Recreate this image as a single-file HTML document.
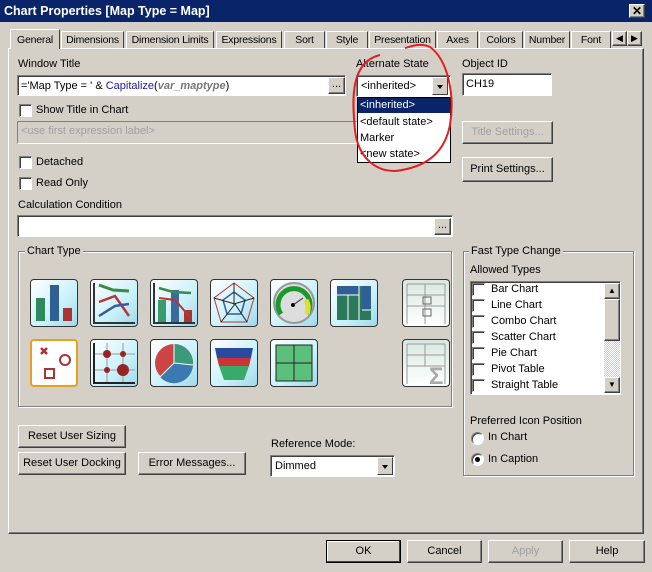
<!DOCTYPE html>
<html><head><style>
body{margin:0;width:652px;height:572px;background:#d4d0c8;font-family:"Liberation Sans",sans-serif;font-size:11px;color:#000;position:relative;overflow:hidden}
.a{position:absolute;white-space:nowrap}
.tb{left:0;top:0;width:652px;height:22px;background:#0a246a;color:#fff;font-weight:bold;font-size:12.5px;line-height:22px}
.in{background:#fff;border:1px solid;border-color:#808080 #fff #fff #808080;box-shadow:inset 1px 1px 0 #404040;box-sizing:border-box}
.btn{background:#d4d0c8;border:1px solid;border-color:#fff #404040 #404040 #fff;box-shadow:inset -1px -1px 0 #808080;box-sizing:border-box;text-align:center;line-height:20px}
.cb{width:13px;height:13px;background:#fff;border:1px solid;border-color:#808080 #fff #fff #808080;box-shadow:inset 1px 1px 0 #404040;box-sizing:border-box}
.grp{border:1px solid #808080;box-shadow:1px 1px 0 #fff,inset 1px 1px 0 #fff}
.lg{background:#d4d0c8;padding:0 2px}
.tab{top:31px;height:17px;line-height:17px;border:1px solid;border-color:#fff #404040 transparent #fff;border-bottom:none;text-align:center;box-sizing:border-box;font-size:10.5px;letter-spacing:-0.2px}
.ic{width:48px;height:48px;border:1px solid #333;border-radius:4px;box-sizing:border-box;background:linear-gradient(135deg,#fff,#c9f1fb 60%,#9fd8ea)}
.dd{width:16px;background:#d4d0c8;border:1px solid;border-color:#fff #404040 #404040 #fff;box-sizing:border-box}
.dd:after{content:"";position:absolute;left:4px;top:7px;border:3px solid transparent;border-top:4px solid #000}
.li{left:472px;height:16px;line-height:16px}
</style></head><body>
<div class="a tb"><span style="padding-left:4px">Chart Properties [Map Type = Map]</span></div>
<div class="a btn" style="left:629px;top:4px;width:16px;height:14px;line-height:12px;font-weight:bold;font-size:12px">✕</div>
<div class="a" style="left:8px;top:48px;width:636px;height:486px;border:1px solid;border-color:#fff #404040 #404040 #fff;box-sizing:border-box;box-shadow:inset -1px -1px 0 #808080"></div>
<div class="a tab" style="left:10px;top:29px;height:20px;width:50px;background:#d4d0c8;z-index:2;line-height:20px">General</div>
<div class="a tab" style="left:61px;width:63px">Dimensions</div>
<div class="a tab" style="left:126px;width:88px">Dimension Limits</div>
<div class="a tab" style="left:216px;width:66px">Expressions</div>
<div class="a tab" style="left:284px;width:41px">Sort</div>
<div class="a tab" style="left:326px;width:42px">Style</div>
<div class="a tab" style="left:369px;width:67px">Presentation</div>
<div class="a tab" style="left:437px;width:41px">Axes</div>
<div class="a tab" style="left:479px;width:44px">Colors</div>
<div class="a tab" style="left:524px;width:46px">Number</div>
<div class="a tab" style="left:571px;width:40px">Font</div>
<div class="a btn" style="left:612px;top:31px;width:15px;height:15px;line-height:13px;font-size:9px">◀</div>
<div class="a btn" style="left:627px;top:31px;width:15px;height:15px;line-height:13px;font-size:9px">▶</div>

<div class="a" style="left:18px;top:58px">Window Title</div>
<div class="a in" style="left:17px;top:75px;width:329px;height:21px;padding:3px 3px;line-height:14px">='Map Type = ' &amp; <span style="color:#1a1aa0">Capitalize</span>(<i style="color:#777;font-weight:bold">var_maptype</i>)</div>
<div class="a btn" style="left:328px;top:77px;width:17px;height:17px;line-height:12px">...</div>
<div class="a" style="left:356px;top:58px">Alternate State</div>
<div class="a in" style="left:356px;top:75px;width:95px;height:22px;padding:4px 4px;line-height:13px">&lt;inherited&gt;</div>
<div class="a dd" style="left:432px;top:77px;height:18px"></div>
<div class="a" style="left:357px;top:97px;width:94px;height:66px;background:#fff;border:1px solid #000;box-sizing:border-box"></div>
<div class="a" style="left:358px;top:98px;width:92px;height:15px;background:#0a246a;color:#fff;line-height:15px;padding-left:2px;box-sizing:border-box">&lt;inherited&gt;</div>
<div class="a" style="left:360px;top:114px;line-height:16px">&lt;default state&gt;</div>
<div class="a" style="left:360px;top:130px;line-height:16px">Marker</div>
<div class="a" style="left:360px;top:146px;line-height:16px">&lt;new state&gt;</div>
<div class="a" style="left:462px;top:58px">Object ID</div>
<div class="a in" style="left:462px;top:73px;width:90px;height:23px;padding:4px 3px;line-height:12px">CH19</div>

<div class="a cb" style="left:19px;top:104px"></div><div class="a" style="left:36px;top:104px">Show Title in Chart</div>
<div class="a" style="left:17px;top:121px;width:340px;height:23px;border:1px solid;border-color:#808080 #fff #fff #808080;box-sizing:border-box;color:#a0a0a0;padding:3px 3px">&lt;use first expression label&gt;</div>
<div class="a btn" style="left:462px;top:121px;width:91px;height:23px;color:#a0a0a0">Title Settings...</div>
<div class="a cb" style="left:19px;top:156px"></div><div class="a" style="left:36px;top:156px">Detached</div>
<div class="a cb" style="left:19px;top:177px"></div><div class="a" style="left:36px;top:177px">Read Only</div>
<div class="a btn" style="left:462px;top:157px;width:91px;height:25px;line-height:23px">Print Settings...</div>
<div class="a" style="left:18px;top:199px">Calculation Condition</div>
<div class="a in" style="left:17px;top:215px;width:436px;height:22px"></div>
<div class="a btn" style="left:434px;top:218px;width:17px;height:17px;line-height:12px">...</div>

<div class="a grp" style="left:18px;top:251px;width:432px;height:154px"></div>
<div class="a lg" style="left:25px;top:245px">Chart Type</div>
<div class="a ic" style="left:30px;top:279px"><svg width="46" height="46"><rect x="5" y="18" width="9" height="23" fill="#2e8a5c"/><rect x="19" y="5" width="9" height="36" fill="#2f5f94"/><rect x="32" y="28" width="9" height="13" fill="#a33"/></svg></div>
<div class="a ic" style="left:90px;top:279px"><svg width="46" height="46"><path d="M3 3V43H44" stroke="#333" stroke-width="2" fill="none"/><path d="M8 5L22 10L38 11" stroke="#3a8a4a" stroke-width="3" fill="none"/><path d="M8 22L24 16L38 36" stroke="#b33" stroke-width="2.5" fill="none"/><path d="M8 36L24 26L38 24" stroke="#3a5a9a" stroke-width="2.5" fill="none"/></svg></div>
<div class="a ic" style="left:150px;top:279px"><svg width="46" height="46"><path d="M3 3V43H44" stroke="#333" stroke-width="2" fill="none"/><rect x="7" y="20" width="8" height="22" fill="#3a9a6a"/><rect x="20" y="10" width="8" height="32" fill="#3a6aa0"/><rect x="33" y="30" width="8" height="12" fill="#a33"/><path d="M8 8L22 12L40 13" stroke="#3a8a4a" stroke-width="2.5" fill="none"/><path d="M8 18L24 20L38 36" stroke="#b33" stroke-width="2" fill="none"/></svg></div>
<div class="a ic" style="left:210px;top:279px"><svg width="46" height="46"><polygon points="23,3 43,18 36,42 10,42 3,18" fill="none" stroke="#b33"/><polygon points="23,12 34,20 30,34 16,34 12,20" fill="none" stroke="#3a5a9a" stroke-width="1.5"/><path d="M23 3V24L43 18M24 24L36 42M24 24L10 42M24 24L3 18" stroke="#222" fill="none"/></svg></div>
<div class="a ic" style="left:270px;top:279px"><svg width="46" height="46"><circle cx="23" cy="23" r="20" fill="#ddd" stroke="#999" stroke-width="2"/><path d="M10 34A16 16 0 1 1 36 34" stroke="#1a9a2a" stroke-width="5" fill="none"/><path d="M35 20A16 16 0 0 1 36 34" stroke="#dd3" stroke-width="5" fill="none"/><circle cx="22" cy="25" r="2"/><path d="M22 25L32 18" stroke="#222"/></svg></div>
<div class="a ic" style="left:330px;top:279px"><svg width="46" height="46"><rect x="6" y="6" width="34" height="34" fill="#2a7a5a"/><rect x="6" y="6" width="22" height="9" fill="#2f5f94"/><rect x="31" y="6" width="9" height="24" fill="#2f5f94"/><path d="M6 15H28M17 15V40M28 6V40M31 30H40" stroke="#fff"/></svg></div>
<div class="a ic" style="left:402px;top:279px;background:linear-gradient(#d8e8e0,#fff)"><svg width="46" height="46"><path d="M4 4H42M4 15H42M4 26H42M22 4V44M4 4V44M42 4V44" stroke="#999" fill="none"/><rect x="20" y="17" width="8" height="7" fill="none" stroke="#666"/><rect x="20" y="29" width="8" height="7" fill="none" stroke="#666"/></svg></div>
<div class="a ic" style="left:30px;top:339px;border:2px solid #e8a020;background:#fff"><svg width="44" height="44"><path d="M9 7L15 13M15 7L9 13" stroke="#a33" stroke-width="2.5"/><circle cx="33" cy="19" r="5" fill="none" stroke="#a33" stroke-width="2"/><rect x="13" y="28" width="9" height="9" fill="none" stroke="#a33" stroke-width="2"/></svg></div>
<div class="a ic" style="left:90px;top:339px"><svg width="46" height="46"><path d="M3 3V43H44M3 14H44M3 30H44M16 3V43M32 3V43" stroke="#999" fill="none"/><path d="M3 3V43H44" stroke="#222" stroke-width="2" fill="none"/><circle cx="16" cy="14" r="4" fill="#922"/><circle cx="32" cy="14" r="3" fill="#922"/><circle cx="16" cy="30" r="3" fill="#922"/><circle cx="32" cy="30" r="6" fill="#922"/></svg></div>
<div class="a ic" style="left:150px;top:339px"><svg width="46" height="46"><circle cx="23" cy="23" r="19" fill="#c44"/><path d="M23 23V4A19 19 0 0 1 42 25Z" fill="#3a9a7a"/><path d="M23 23L42 25A19 19 0 0 1 9 37Z" fill="#3a7ab0"/><path d="M23 23V4M23 23L42 25M23 23L9 37" stroke="#fff"/></svg></div>
<div class="a ic" style="left:210px;top:339px"><svg width="46" height="46"><polygon points="4,8 42,8 40,18 6,18" fill="#2a4aa0"/><polygon points="6,18 40,18 38,26 8,26" fill="#c33"/><polygon points="8,26 38,26 33,40 13,40" fill="#3aaa6a"/></svg></div>
<div class="a ic" style="left:270px;top:339px"><svg width="46" height="46"><rect x="5" y="5" width="36" height="36" fill="#5ac07a" stroke="#222"/><path d="M23 5V41M5 23H41" stroke="#222"/></svg></div>
<div class="a ic" style="left:402px;top:339px;background:linear-gradient(#d8e8e0,#fff)"><svg width="46" height="46"><path d="M4 4H42M4 15H42M4 26H42M22 4V26M4 4V44M42 4V44" stroke="#999" fill="none"/><text x="26" y="44" font-size="24" font-weight="bold" fill="#aaa" font-family="Liberation Sans">Σ</text></svg></div>

<div class="a grp" style="left:463px;top:251px;width:169px;height:223px"></div>
<div class="a lg" style="left:469px;top:245px">Fast Type Change</div>
<div class="a" style="left:470px;top:264px">Allowed Types</div>
<div class="a in" style="left:470px;top:281px;width:151px;height:114px"></div>
<div class="a" style="left:604px;top:283px;width:16px;height:110px;background:repeating-conic-gradient(#fff 0 25%,#d4d0c8 0 50%) 0 0/2px 2px"></div>
<div class="a btn" style="left:604px;top:283px;width:16px;height:16px;font-size:8px;line-height:14px">▲</div>
<div class="a btn" style="left:604px;top:299px;width:16px;height:42px"></div>
<div class="a btn" style="left:604px;top:377px;width:16px;height:16px;font-size:8px;line-height:14px">▼</div>
<div class="a cb li" style="top:283px;width:13px;height:13px"></div><div class="a li" style="left:491px;top:281px">Bar Chart</div>
<div class="a cb li" style="top:299px;width:13px;height:13px"></div><div class="a li" style="left:491px;top:297px">Line Chart</div>
<div class="a cb li" style="top:315px;width:13px;height:13px"></div><div class="a li" style="left:491px;top:313px">Combo Chart</div>
<div class="a cb li" style="top:331px;width:13px;height:13px"></div><div class="a li" style="left:491px;top:329px">Scatter Chart</div>
<div class="a cb li" style="top:347px;width:13px;height:13px"></div><div class="a li" style="left:491px;top:345px">Pie Chart</div>
<div class="a cb li" style="top:363px;width:13px;height:13px"></div><div class="a li" style="left:491px;top:361px">Pivot Table</div>
<div class="a cb li" style="top:379px;width:13px;height:13px"></div><div class="a li" style="left:491px;top:377px">Straight Table</div>
<div class="a" style="left:470px;top:415px">Preferred Icon Position</div>
<div class="a cb" style="left:471px;top:432px;border-radius:50%"></div><div class="a" style="left:488px;top:431px">In Chart</div>
<div class="a cb" style="left:471px;top:453px;border-radius:50%"></div><div class="a" style="left:475px;top:457px;width:5px;height:5px;border-radius:50%;background:#000"></div><div class="a" style="left:488px;top:453px">In Caption</div>

<div class="a btn" style="left:18px;top:425px;width:108px;height:23px">Reset User Sizing</div>
<div class="a btn" style="left:18px;top:452px;width:108px;height:23px">Reset User Docking</div>
<div class="a btn" style="left:138px;top:452px;width:108px;height:23px">Error Messages...</div>
<div class="a" style="left:271px;top:438px">Reference Mode:</div>
<div class="a in" style="left:270px;top:455px;width:125px;height:22px;padding:4px 4px;line-height:13px">Dimmed</div>
<div class="a dd" style="left:377px;top:457px;height:18px"></div>

<div class="a btn" style="left:326px;top:540px;width:75px;height:23px;border:1px solid #000;box-shadow:inset -1px -1px 0 #404040,inset 1px 1px 0 #fff">OK</div>
<div class="a btn" style="left:407px;top:540px;width:75px;height:23px">Cancel</div>
<div class="a btn" style="left:488px;top:540px;width:75px;height:23px;color:#a0a0a0">Apply</div>
<div class="a btn" style="left:569px;top:540px;width:76px;height:23px">Help</div>

<svg class="a" style="left:0;top:0" width="652" height="572"><path d="M380 55C350 62 352 100 355 130C358 160 380 175 402 170C430 165 445 150 450 125C455 95 448 60 430 47C420 42 410 47 405 48" stroke="#e02020" stroke-width="2" fill="none"/></svg>
</body></html>
